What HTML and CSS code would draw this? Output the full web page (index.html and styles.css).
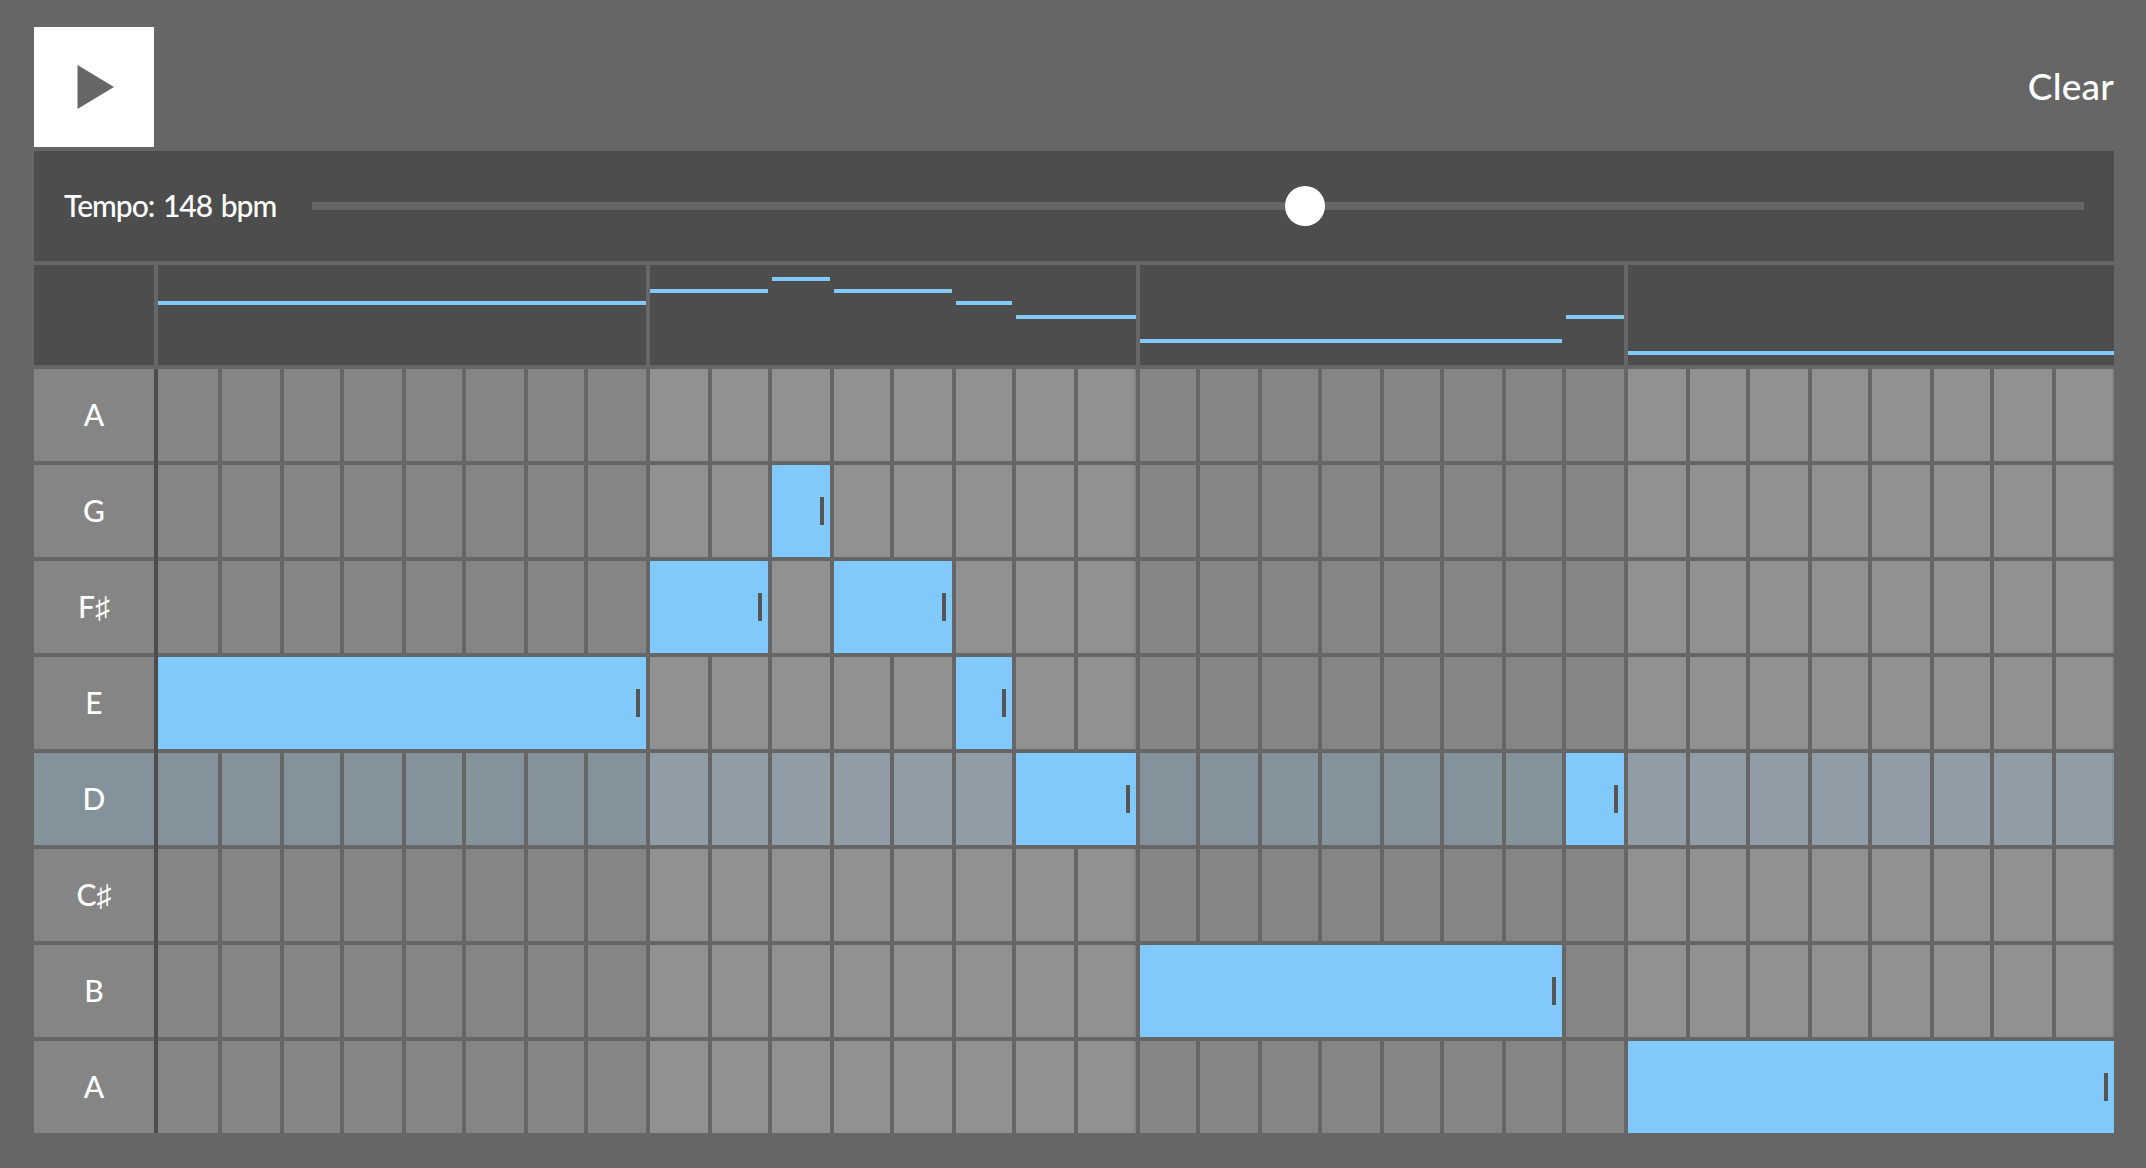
FILE: index.html
```html
<!DOCTYPE html>
<html lang="en">
<head>
<meta charset="utf-8">
<title>Melody sequencer</title>
<link rel="stylesheet" href="styles.css">
</head>
<body>
<main class="sequencer">
  <header class="toolbar">
    <button class="play" aria-label="Play">
      <svg width="38" height="44" viewBox="0 0 38 44"><path d="M0.5 0L37 22L0.5 44Z"/></svg>
    </button>
    <button class="clear">Clear</button>
  </header>
  <section class="tempo">
    <span class="tempo-label">Tempo: 148 bpm</span>
    <div class="slider"><div class="knob"></div></div>
  </section>
  <section class="overview">
    <div class="corner"></div>
    <div class="measures">
      <div class="measure"></div>
      <div class="measure"></div>
      <div class="measure"></div>
      <div class="measure"></div>
    </div>
    <div class="lines"></div>
  </section>
  <section class="rows"></section>
</main>
<script src="script.js"></script>
</body>
</html>
```
FILE: styles.css
```css
* {
  box-sizing: border-box;
}

body {
  margin: 0;
  background: #666;
  color: #fff;
  font-family: Lato, sans-serif;
  font-weight: 500;
}

button {
  border: 0;
  padding: 0;
  background: none;
  color: inherit;
  font: inherit;
}

.sequencer {
  --steps:
    60px 58px 56px 58px 56px 58px 56px 58px
    58px 56px 58px 56px 58px 56px 58px 58px
    56px 58px 56px 58px 56px 58px 56px 58px
    58px 56px 58px 56px 58px 56px 58px 58px;
  display: flex;
  flex-direction: column;
  gap: 4px;
  width: 2114px;
  padding: 27px 0 0 34px;
}

.toolbar {
  display: flex;
  justify-content: space-between;
  align-items: center;
  height: 120px;
}

.play {
  display: flex;
  align-items: center;
  justify-content: center;
  width: 120px;
  height: 120px;
  padding-left: 3px;
  background: #fff;
}

.play svg {
  fill: #666;
}

.clear {
  padding-bottom: 2px;
  font-size: 37px;
  line-height: 44px;
  letter-spacing: 0.2px;
}

.tempo {
  display: flex;
  align-items: center;
  height: 110px;
  padding: 0 30px;
  background: #4d4d4d;
}

.tempo-label {
  width: 248px;
  padding-bottom: 2px;
  font-size: 30px;
  line-height: 36px;
  letter-spacing: -1px;
  word-spacing: 2px;
  white-space: nowrap;
}

.slider {
  display: flex;
  align-items: center;
  flex: 1;
  height: 8px;
  padding-left: 973px;
  background: #666;
}

.knob {
  width: 40px;
  height: 40px;
  border-radius: 50%;
  background: #fff;
}

.overview {
  display: grid;
  grid-template-columns: 120px 1956px;
  column-gap: 4px;
  height: 100px;
}

.corner,
.measure {
  background: #4d4d4d;
}

.measures,
.lines {
  display: grid;
  grid-row: 1;
  grid-column: 2;
  column-gap: 4px;
}

.measures {
  grid-template-columns: 488px 486px 484px 486px;
}

.lines {
  grid-template-columns: var(--steps);
}

.line {
  grid-row: 1;
  height: 4px;
  background: #81c9fa;
}

.rows {
  display: flex;
  flex-direction: column;
  gap: 4px;
  background: linear-gradient(#4d4d4d, #4d4d4d) 120px 0 / 4px 100% no-repeat;
}

.row {
  --dark: #858585;
  --light: #919191;
  display: grid;
  grid-template-columns: 120px var(--steps);
  column-gap: 4px;
  height: 92px;
}

.row.tonic {
  --dark: #84929b;
  --light: #909da6;
}

.pitch {
  display: flex;
  align-items: center;
  justify-content: center;
  padding-bottom: 3px;
  background: var(--dark);
  font-size: 30px;
  line-height: 36px;
}

.cell {
  background: var(--dark);
}

.cell.light {
  background: var(--light);
}

.cell.last {
  border-right: 2px solid var(--dark);
}

.note {
  display: flex;
  align-items: center;
  justify-content: flex-end;
  padding-right: 6px;
  background: #81c9fa;
}

.handle {
  width: 4px;
  height: 28px;
  background: #555;
}
```
FILE: script.js
```js
const STEPS = 32;
const STEPS_PER_MEASURE = 8;

// Each note is [first step, length in steps]; lineY is the row's height in the overview.
const rows = [
  { pitch: "A", lineY: 2, notes: [] },
  { pitch: "G", lineY: 12, notes: [[10, 1]] },
  { pitch: "F♯", lineY: 24, notes: [[8, 2], [11, 2]] },
  { pitch: "E", lineY: 36, notes: [[0, 8], [13, 1]] },
  { pitch: "D", lineY: 50, notes: [[14, 2], [23, 1]], tonic: true },
  { pitch: "C♯", lineY: 62, notes: [] },
  { pitch: "B", lineY: 74, notes: [[16, 7]] },
  { pitch: "A", lineY: 86, notes: [[24, 8]] }
];

function add(parent, className, text) {
  const el = document.createElement("div");
  el.className = className;
  if (text) el.textContent = text;
  parent.appendChild(el);
  return el;
}

const grid = document.querySelector(".rows");
const lines = document.querySelector(".lines");

for (const row of rows) {
  const rowEl = add(grid, row.tonic ? "row tonic" : "row");
  add(rowEl, "pitch", row.pitch);
  let step = 0;
  while (step < STEPS) {
    const note = row.notes.find(([start]) => start === step);
    if (note) {
      const noteEl = add(rowEl, "note");
      noteEl.style.gridColumn = `span ${note[1]}`;
      add(noteEl, "handle");
      const line = add(lines, "line");
      line.style.gridColumn = `${step + 1} / span ${note[1]}`;
      line.style.marginTop = `${row.lineY}px`;
      step += note[1];
      continue;
    }
    const light = Math.floor(step / STEPS_PER_MEASURE) % 2 === 1;
    const last = light && step % STEPS_PER_MEASURE === STEPS_PER_MEASURE - 1;
    add(rowEl, "cell" + (light ? " light" : "") + (last ? " last" : ""));
    step++;
  }
}
```
